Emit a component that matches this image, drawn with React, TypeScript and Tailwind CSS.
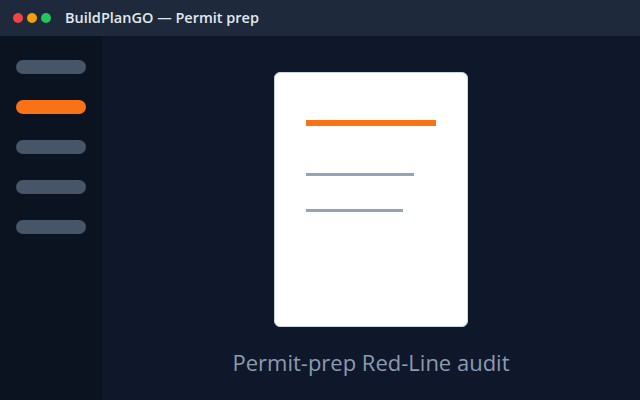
import React from 'react';

const navItems = ['plans', 'permits', 'codes', 'reviews', 'settings'];

export default function App() {
  const active = 'permits';

  return (
    <div
      className="w-[640px] h-[400px] flex flex-col bg-[#0f172a] overflow-hidden"
      style={{ fontFamily: '"Open Sans", "Noto Sans", sans-serif' }}
    >
      {/* Title bar */}
      <header className="h-[36px] shrink-0 bg-[#1e293b] flex items-center pl-[13px]">
        <div className="flex items-center gap-[4px]">
          <span className="w-[10px] h-[10px] rounded-full bg-[#ef4444]" />
          <span className="w-[10px] h-[10px] rounded-full bg-[#f59e0b]" />
          <span className="w-[10px] h-[10px] rounded-full bg-[#22c55e]" />
        </div>
        <h1 className="ml-[14px] text-[14.5px] font-semibold text-[#e2e8f0] leading-none">
          BuildPlanGO — Permit prep
        </h1>
      </header>

      <div className="flex flex-1 min-h-0">
        {/* Sidebar */}
        <nav className="w-[102px] shrink-0 bg-[#0b1220] flex flex-col gap-[26px] pt-[24px] pl-[16px]">
          {navItems.map((id) => (
            <div
              key={id}
              className={`w-[70px] h-[14px] rounded-full ${
                id === active ? 'bg-[#f97316]' : 'bg-[#475569]'
              }`}
            />
          ))}
        </nav>

        {/* Main */}
        <main className="flex-1 flex flex-col items-center pt-[36px]">
          <div className="w-[194px] h-[255px] bg-white rounded-[6px] border border-[#cbd5e1] pl-[31px] pt-[47px] flex flex-col">
            <div className="w-[130px] h-[6px] bg-[#f97316]" />
            <div className="w-[108px] h-[3px] bg-[#94a3b8] mt-[47px]" />
            <div className="w-[97px] h-[3px] bg-[#94a3b8] mt-[33px]" />
          </div>
          <p className="mt-[20px] text-[22px] leading-[30px] text-[#8b9bb0]">
            Permit-prep Red-Line audit
          </p>
        </main>
      </div>
    </div>
  );
}
